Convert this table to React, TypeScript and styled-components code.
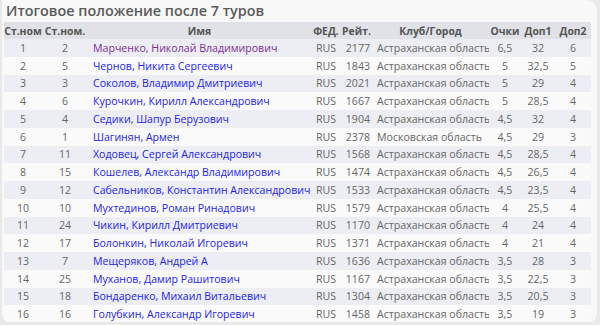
import React from "react";
import styled, { createGlobalStyle } from "styled-components";

const GlobalStyle = createGlobalStyle`
  html, body {
    margin: 0;
    padding: 0;
    background: #e9e9ea;
  }
  body {
    font-family: "Open Sans", "Noto Sans", sans-serif;
  }
`;

const Card = styled("section")`
  margin: 0 3px 0 2px;
  height: 322px;
  box-sizing: border-box;
  padding: 0 6px 0 2px;
  background: #f8f8f9;
  border-radius: 0 10px 8px 8px;
  overflow: hidden;
`;

const Title = styled("h2")`
  margin: 0;
  height: 22px;
  line-height: 22px;
  padding-left: 2px;
  font-size: 14.4px;
  font-weight: 600;
  color: #5a5a5a;
  white-space: nowrap;
`;

const Table = styled("table")`
  width: 587px;
  table-layout: fixed;
  border-collapse: collapse;
  font-size: 10.6px;
  color: #666;
`;

const HeadCell = styled("th")`
  height: 17px;
  padding: 0;
  background: #e0e2e7;
  color: #555;
  font-weight: 700;
  font-size: 10.4px;
  text-align: center;
  white-space: nowrap;
`;

const Row = styled("tr")<{ $odd: boolean }>`
  height: 17.75px;
  background: ${(p) => (p.$odd ? "#eceef4" : "#fafafa")};
`;

const Cell = styled("td")<{ $align?: "left" | "center" | "right"; $pad?: number }>`
  padding: 0 ${(p) => (p.$align === "right" ? p.$pad ?? 2 : 0)}px 0
    ${(p) => (p.$align === "left" ? p.$pad ?? 2 : 0)}px;
  text-align: ${(p) => p.$align ?? "center"};
  white-space: nowrap;
  overflow: hidden;
`;

const NameLink = styled("a")<{ $visited?: boolean }>`
  color: ${(p) => (p.$visited ? "#7d2e94" : "#2424e6")};
  text-decoration: none;
`;

type Player = [number, number, string, string, number, string, string, string, number];

const players: Player[] = [
  [1, 2, "Марченко, Николай Владимирович", "RUS", 2177, "Астраханская область", "6,5", "32", 6],
  [2, 5, "Чернов, Никита Сергеевич", "RUS", 1843, "Астраханская область", "5", "32,5", 5],
  [3, 3, "Соколов, Владимир Дмитриевич", "RUS", 2021, "Астраханская область", "5", "29", 4],
  [4, 6, "Курочкин, Кирилл Александрович", "RUS", 1667, "Астраханская область", "5", "28,5", 4],
  [5, 4, "Седики, Шапур Берузович", "RUS", 1904, "Астраханская область", "4,5", "32", 4],
  [6, 1, "Шагинян, Армен", "RUS", 2378, "Московская область", "4,5", "29", 3],
  [7, 11, "Ходовец, Сергей Александрович", "RUS", 1568, "Астраханская область", "4,5", "28,5", 4],
  [8, 15, "Кошелев, Александр Владимирович", "RUS", 1474, "Астраханская область", "4,5", "26,5", 4],
  [9, 12, "Сабельников, Константин Александрович", "RUS", 1533, "Астраханская область", "4,5", "23,5", 4],
  [10, 10, "Мухтединов, Роман Ринадович", "RUS", 1579, "Астраханская область", "4", "25,5", 4],
  [11, 24, "Чикин, Кирилл Дмитриевич", "RUS", 1170, "Астраханская область", "4", "24", 4],
  [12, 17, "Болонкин, Николай Игоревич", "RUS", 1371, "Астраханская область", "4", "21", 4],
  [13, 7, "Мещеряков, Андрей А", "RUS", 1636, "Астраханская область", "3,5", "28", 3],
  [14, 25, "Муханов, Дамир Рашитович", "RUS", 1167, "Астраханская область", "3,5", "22,5", 3],
  [15, 18, "Бондаренко, Михаил Витальевич", "RUS", 1304, "Астраханская область", "3,5", "20,5", 3],
  [16, 16, "Голубкин, Александр Игоревич", "RUS", 1458, "Астраханская область", "3,5", "19", 3],
];

const widths = [38, 46, 223, 30, 31, 117, 32, 34, 36];

function App() {
  return (
    <>
      <GlobalStyle />
      <Card>
        <Title>Итоговое положение после 7 туров</Title>
        <Table>
          <colgroup>
            {widths.map((w, i) => (
              <col key={i} style={{ width: w }} />
            ))}
          </colgroup>
          <thead>
            <tr>
              <HeadCell>Ст.ном</HeadCell>
              <HeadCell>Ст.ном.</HeadCell>
              <HeadCell>Имя</HeadCell>
              <HeadCell>ФЕД.</HeadCell>
              <HeadCell>Рейт.</HeadCell>
              <HeadCell>Клуб/Город</HeadCell>
              <HeadCell>Очки</HeadCell>
              <HeadCell>Доп1</HeadCell>
              <HeadCell>Доп2</HeadCell>
            </tr>
          </thead>
          <tbody>
            {players.map((p, i) => (
              <Row key={p[0]} $odd={i % 2 === 0}>
                <Cell>{p[0]}</Cell>
                <Cell>{p[1]}</Cell>
                <Cell $align="left" $pad={5}>
                  <NameLink href="#" $visited={i === 0}>
                    {p[2]}
                  </NameLink>
                </Cell>
                <Cell>{p[3]}</Cell>
                <Cell $align="right" $pad={2}>{p[4]}</Cell>
                <Cell $align="left" $pad={5}>{p[5]}</Cell>
                <Cell>{p[6]}</Cell>
                <Cell>{p[7]}</Cell>
                <Cell>{p[8]}</Cell>
              </Row>
            ))}
          </tbody>
        </Table>
      </Card>
    </>
  );
}

export default App;
